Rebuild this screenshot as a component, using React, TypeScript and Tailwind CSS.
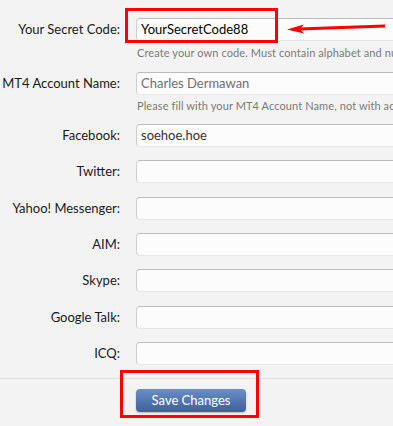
import React from "react";

type Field = {
  label: string;
  value?: string;
  valueClass?: string;
  mt: string;
};

const contactFields: Field[] = [
  { label: "Facebook:", value: "soehoe.hoe", valueClass: "text-[#333]", mt: "mt-[11px]" },
  { label: "Twitter:", mt: "mt-[13px]" },
  { label: "Yahoo! Messenger:", mt: "mt-[14px]" },
  { label: "AIM:", mt: "mt-[13px]" },
  { label: "Skype:", mt: "mt-[13px]" },
  { label: "Google Talk:", mt: "mt-[14px]" },
  { label: "ICQ:", mt: "mt-[13px]" },
];

function TextBox({ value, className }: { value?: string; className?: string }) {
  return (
    <div
      className={
        "h-[23px] w-[300px] shrink-0 rounded-[4px] border border-[#cfcfcf] border-t-[#bcbcbc] border-b-[#e6e6e6] bg-[#fcfcfc] pl-[4px] text-[13px] leading-[21px] " +
        (className ?? "")
      }
    >
      {value}
    </div>
  );
}

function Row({ label, children, className }: { label: string; children: React.ReactNode; className?: string }) {
  return (
    <div className={"flex items-center " + (className ?? "")}>
      <label className="w-[120px] shrink-0 text-right text-[13px] text-[#1a1a1a]">{label}</label>
      <div className="ml-[16px]">{children}</div>
    </div>
  );
}

export default function App() {
  return (
    <div
      className="relative h-[426px] w-full overflow-hidden bg-[#f3f3f3]"
      style={{ fontFamily: "Lato, 'Open Sans', sans-serif" }}
    >
      <div className="pt-[18px]">
        <Row label="Your Secret Code:">
          <TextBox value="YourSecretCode88" className="text-black" />
        </Row>
        <p className="ml-[137px] mt-[5px] whitespace-nowrap text-[11px] leading-[14px] tracking-[0.1px] text-[#7a7a7a]">
          Create your own code. Must contain alphabet and number
        </p>

        <Row label="MT4 Account Name:" className="mt-[12px]">
          <TextBox value="Charles Dermawan" className="text-[#707070]" />
        </Row>
        <p className="ml-[137px] mt-[4px] whitespace-nowrap text-[11px] leading-[14px] tracking-[0.1px] text-[#7a7a7a]">
          Please fill with your MT4 Account Name, not with account number
        </p>

        {contactFields.map((f) => (
          <Row key={f.label} label={f.label} className={f.mt}>
            <TextBox value={f.value} className={f.valueClass} />
          </Row>
        ))}

        <div className="mt-[13px] border-t border-[#e0e0e0] pt-[8px]">
          <button className="ml-[136px] h-[23px] w-[110px] rounded-[4px] bg-gradient-to-b from-[#6b8ec5] to-[#3c609d] text-[13px] text-white shadow-[0_1px_2px_rgba(0,0,0,0.25)]">
            Save Changes
          </button>
        </div>
      </div>

      {/* highlight marks */}
      <div className="absolute left-[125px] top-[8px] h-[35px] w-[153px] border-[3px] border-[#ff0000]" />
      <div className="absolute left-[120px] top-[370px] h-[48px] w-[139px] border-[3px] border-[#ff0000]" />
      <svg className="absolute left-[280px] top-[18px]" width="113" height="20" viewBox="280 18 113 20">
        <polygon points="299,27.5 385,24.5 385,27.5 299,30.5" fill="#ff0000" />
        <polygon points="287,29.5 304,24.5 300,29 304,33.5" fill="#ff0000" />
      </svg>
    </div>
  );
}
